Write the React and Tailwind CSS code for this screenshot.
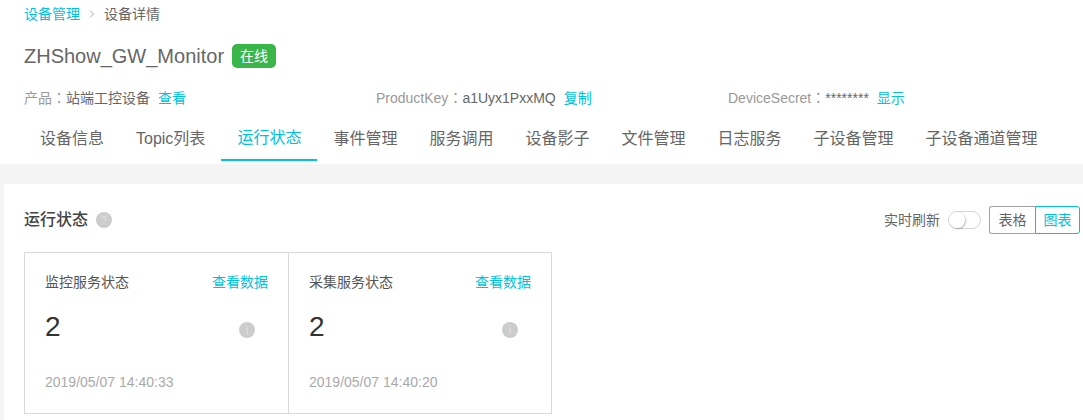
import React from "react";

const cyan = "text-[#00c1de]";

const tabs = ["设备信息", "Topic列表", "运行状态", "事件管理", "服务调用", "设备影子", "文件管理", "日志服务", "子设备管理", "子设备通道管理"];

const cards = [
  { title: "监控服务状态", value: "2", time: "2019/05/07 14:40:33" },
  { title: "采集服务状态", value: "2", time: "2019/05/07 14:40:20" },
];

const HintIcon = ({ children, className }) => (
  <span className={`flex h-4 w-4 items-center justify-center rounded-full bg-[#cccccc] text-[11px] leading-none text-[#e2e2e2] ${className}`}>
    {children}
  </span>
);

// the picture's full-width colon sits centred in its box, the TC face has that
const Colon = () => <span className="font-['Noto_Sans_CJK_TC']">：</span>;

const StatusCard = ({ title, value, time, last }) => (
  <div className={`flex h-full shrink-0 flex-col px-[20px] ${last ? "w-[262px]" : "w-[264px] border-r border-[#d9d9d9]"}`}>
    <div className="mt-[18px] flex h-[22px] items-center justify-between">
      <span className="text-[#555555]">{title}</span>
      <a className={cyan}>查看数据</a>
    </div>
    <div className="mt-[14px] flex items-start justify-between">
      <span className="h-[40px] text-[28px] leading-[40px] text-[#333333]">{value}</span>
      <HintIcon className="mr-[13px] mt-[15px]">i</HintIcon>
    </div>
    <div className="mt-[24px] h-[22px] leading-[22px] text-[#aaaaaa]">{time}</div>
  </div>
);

export default function App() {
  return (
    <div className="h-[420px] w-[1083px] overflow-hidden bg-[#f4f4f4] font-['Liberation_Sans','Noto_Sans_CJK_SC',sans-serif] text-[14px] leading-[22px]">
      <header className="h-[164px] bg-white">
        <div className="flex h-[28px] items-center pl-[24px]">
          <a className={cyan}>设备管理</a>
          <svg className="mx-[8px] h-[8px] w-[8px]" viewBox="0 0 8 8" fill="none" stroke="#aaaaaa" strokeWidth="1">
            <path d="M2 .5 5.5 4 2 7.5" />
          </svg>
          <span className="text-[#666666]">设备详情</span>
        </div>

        <div className="mt-[16px] flex h-[24px] items-center pl-[24px]">
          <h1 className="text-[20px] font-normal text-[#666666]">ZHShow_GW_Monitor</h1>
          <span className="ml-[8px] flex h-[24px] w-[44px] items-center justify-center rounded-[5px] bg-[#3ab54a] text-white">在线</span>
        </div>

        <div className="mt-[18px] flex h-[22px] pl-[24px]">
          <div className="w-[352px]">
            <span className="text-[#999999]">产品<Colon /></span>
            <span className="text-[#666666]">站端工控设备</span>
            <a className={`ml-[8px] ${cyan}`}>查看</a>
          </div>
          <div className="w-[352px]">
            <span className="text-[#999999]">ProductKey<Colon /></span>
            <span className="text-[#666666]">a1Uyx1PxxMQ</span>
            <a className={`ml-[8px] ${cyan}`}>复制</a>
          </div>
          <div>
            <span className="text-[#999999]">DeviceSecret<Colon /></span>
            <span className="text-[#666666]">********</span>
            <a className={`ml-[8px] ${cyan}`}>显示</a>
          </div>
        </div>

        <nav className="mt-[6px] flex h-[47px] pl-[24px] text-[16px]">
          {tabs.map((tab) => (
            <a
              key={tab}
              className={`flex h-full items-center px-[16px] pt-[2px] ${
                tab === "运行状态" ? "border-b-2 border-[#00c1de] text-[#00c1de]" : "text-[#666666]"
              }`}
            >
              {tab}
            </a>
          ))}
        </nav>
      </header>

      <main className="ml-[4px] mt-[20px] h-[236px] bg-white pl-[20px] pr-[3px]">
        <div className="flex h-[68px] items-center justify-between pt-[4px]">
          <div className="flex items-center">
            <h2 className="text-[16px] font-medium text-[#444444]">运行状态</h2>
            <HintIcon className="ml-[8px]">?</HintIcon>
          </div>
          <div className="flex items-center">
            <span className="text-[#666666]">实时刷新</span>
            <div className="ml-[8px] h-[18px] w-[33px] rounded-full border border-[#d4d4dc] bg-white">
              <div className="h-[16px] w-[16px] rounded-full bg-white shadow-[1px_1px_2px_rgba(0,0,0,0.25)]" />
            </div>
            <div className="ml-[8px] flex h-[28px]">
              <button className="w-[46px] rounded-l-[3px] border border-r-0 border-[#a0a0a8] text-[#666666]">表格</button>
              <button className={`w-[45px] rounded-r-[3px] border border-[#00c1de] ${cyan}`}>图表</button>
            </div>
          </div>
        </div>

        <div className="flex h-[162px] w-[528px] border border-[#d9d9d9]">
          {cards.map((card, i) => (
            <StatusCard key={card.title} {...card} last={i === cards.length - 1} />
          ))}
        </div>
      </main>
    </div>
  );
}
